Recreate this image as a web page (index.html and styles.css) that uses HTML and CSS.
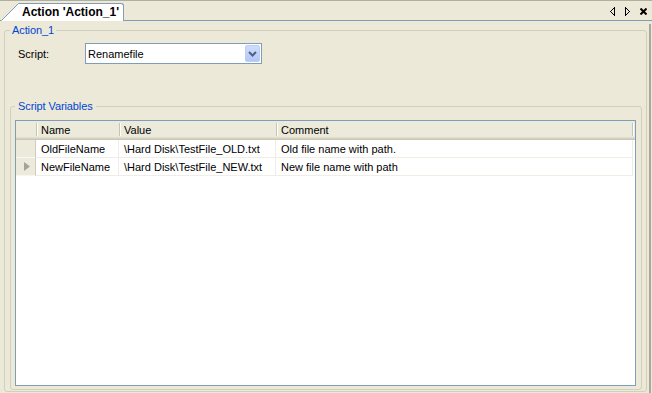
FILE: index.html
```html
<!DOCTYPE html>
<html>
<head>
<meta charset="utf-8">
<title>Action 'Action_1'</title>
<link rel="stylesheet" href="styles.css">
</head>
<body>
<div class="tabstrip">
  <div class="tab">
    <svg class="tab-slant" width="19" height="18" viewBox="0 0 19 18">
      <polygon points="0,18 17.5,0.5 19,0.5 19,18" fill="#fff"/>
      <polyline points="0.5,17.5 17.5,0.5 19,0.5" fill="none" stroke="#7F9DB9"/>
    </svg>
    <span class="tab-label">Action 'Action_1'</span>
  </div>
  <div class="tools">
    <svg class="ic ic-prev" width="5" height="9" viewBox="0 0 5 9" shape-rendering="crispEdges">
      <path d="M4 0h1v9h-1zM3 1h1v1h-1zM2 2h1v1h-1zM1 3h1v1h-1zM0 4h1v1h-1zM1 5h1v1h-1zM2 6h1v1h-1zM3 7h1v1h-1z" fill="#000"/>
    </svg>
    <svg class="ic ic-next" width="5" height="9" viewBox="0 0 5 9" shape-rendering="crispEdges">
      <path d="M0 0h1v9h-1zM1 1h1v1h-1zM2 2h1v1h-1zM3 3h1v1h-1zM4 4h1v1h-1zM3 5h1v1h-1zM2 6h1v1h-1zM1 7h1v1h-1z" fill="#000"/>
    </svg>
    <svg class="ic ic-close" width="7" height="7" viewBox="0 0 7 7">
      <path d="M0.5 0.5L6.5 6.5M6.5 0.5L0.5 6.5" stroke="#000" stroke-width="2" fill="none"/>
    </svg>
  </div>
</div>
<div class="content">
  <fieldset class="group outer">
    <legend>Action_1</legend>
    <div class="script-row">
      <span class="label">Script:</span>
      <div class="combo">
        <span class="combo-text">Renamefile</span>
        <span class="combo-btn">
          <svg width="9" height="6" viewBox="0 0 9 6"><path d="M1 1L4.5 4.5L8 1" stroke="#4D6185" stroke-width="2" fill="none"/></svg>
        </span>
      </div>
    </div>
    <fieldset class="group inner">
      <legend>Script Variables</legend>
      <div class="grid">
        <div class="grid-head">
          <div class="hc rh"></div>
          <div class="hc sep c-name">Name</div>
          <div class="hc sep c-value">Value</div>
          <div class="hc sep c-comment">Comment</div>
          <div class="hc sep c-end"></div>
        </div>
        <div class="grid-row">
          <div class="rh"></div>
          <div class="c c-name">OldFileName</div>
          <div class="c c-value">\Hard Disk\TestFile_OLD.txt</div>
          <div class="c c-comment">Old file name with path.</div>
        </div>
        <div class="grid-row">
          <div class="rh"><svg width="6" height="9" viewBox="0 0 6 9"><polygon points="0,0 6,4.5 0,9" fill="#A5A398"/></svg></div>
          <div class="c c-name">NewFileName</div>
          <div class="c c-value">\Hard Disk\TestFile_NEW.txt</div>
          <div class="c c-comment">New file name with path</div>
        </div>
      </div>
    </fieldset>
  </fieldset>
</div>
</body>
</html>
```

FILE: styles.css
```css
html, body {
  margin: 0;
  padding: 0;
}
body {
  width: 652px;
  height: 393px;
  overflow: hidden;
  background: #ECE9D8;
  font-family: "Liberation Sans", Arial, sans-serif;
  font-size: 11px;
  color: #000;
}

/* ---------- tab strip ---------- */
.tabstrip {
  display: flex;
  align-items: flex-end;
  height: 19px;
  border-top: 1px solid #B1AE9E;
  border-bottom: 1px solid #7F9DB9;
  padding-left: 1px;
  background: #ECE9D8;
}
.tab {
  display: flex;
  height: 18px;
  margin-bottom: -1px;
}
.tab-slant {
  display: block;
}
.tab-label {
  background: #fff;
  border-top: 1px solid #7F9DB9;
  border-right: 1px solid #7F9DB9;
  border-top-right-radius: 3px;
  padding-left: 2px;
  width: 101px;
  font-weight: bold;
  font-size: 12px;
  line-height: 17px;
  white-space: nowrap;
}
.tools {
  margin-left: auto;
  align-self: stretch;
  display: flex;
  align-items: flex-start;
  padding-right: 5px;
}
.ic {
  display: block;
}
.ic-prev { margin-top: 6px; }
.ic-next { margin-top: 6px; margin-left: 10px; }
.ic-close { margin-top: 7px; margin-left: 10px; }

/* ---------- content ---------- */
.content {
  height: 372px;
  border-right: 2px solid #ACA899;
  margin-right: 1px;
}
.group {
  border: 1px solid #D0D0BF;
  border-radius: 3px;
  min-width: 0;
  min-inline-size: 0;
}
.group > legend {
  color: #0046D5;
  font-size: 11px;
  line-height: 13px;
  padding: 0 2px;
  letter-spacing: -0.1px;
}
.outer {
  margin: 3px 2px 0 4px;
  padding: 0 4px 1px 5px;
}
.inner {
  margin: 36px 0 0 0;
  padding: 7px 5px 3px 4px;
}
.inner > legend {
  padding: 0 3px;
}

/* ---------- script row ---------- */
.script-row {
  display: flex;
  align-items: center;
  margin-top: 6px;
  height: 21px;
}
.label {
  width: 75px;
  padding-left: 8px;
  box-sizing: border-box;
}
.combo {
  width: 177px;
  height: 21px;
  box-sizing: border-box;
  border: 1px solid #7F9DB9;
  background: #fff;
  display: flex;
  align-items: center;
  padding: 0 1px 0 2px;
}
.combo-text {
  flex: 1;
}
.combo-btn {
  width: 15px;
  height: 17px;
  box-sizing: border-box;
  border: 1px solid #BBCDF7;
  border-radius: 2px;
  background: linear-gradient(#CFDDFD, #B3C7F5);
  display: flex;
  align-items: center;
  justify-content: center;
}
.combo-btn svg {
  display: block;
}

/* ---------- grid ---------- */
.grid {
  height: 266px;
  box-sizing: border-box;
  border: 1px solid #7F9DB9;
  background: #fff;
}
.grid-head {
  display: flex;
  height: 19px;
  background: linear-gradient(to bottom, #EBEADB 0, #EBEADB 16px, #E2DECD 16px, #E2DECD 17px, #D6D2C2 17px, #D6D2C2 18px, #CBC7B8 18px);
}
.hc {
  height: 19px;
  line-height: 19px;
  padding-left: 5px;
  box-sizing: border-box;
  white-space: nowrap;
}
.hc.rh {
  width: 20px;
  padding: 0;
}
.sep {
  background:
    linear-gradient(#C7C5B2, #C7C5B2) 0 2px / 1px 13px no-repeat,
    linear-gradient(#FFFFFF, #FFFFFF) 1px 2px / 1px 13px no-repeat;
}
.c-name { width: 83px; }
.c-value { width: 157px; }
.hc.c-comment { width: 356px; }
.hc.c-end { flex: 1; padding: 0; }

.grid-row {
  display: flex;
  height: 18px;
}
.grid-row .rh {
  width: 20px;
  box-sizing: border-box;
  background: #EBEADB;
  border-right: 1px solid #CFCCBB;
  border-bottom: 1px solid #F7F6F0;
  display: flex;
  align-items: center;
  padding-left: 8px;
}
.grid-row .rh svg {
  display: block;
}
.c {
  box-sizing: border-box;
  height: 18px;
  padding: 1px 0 0 5px;
  line-height: 16px;
  border-right: 1px solid #EFEDE4;
  border-bottom: 1px solid #EFEDE4;
  white-space: nowrap;
  overflow: hidden;
}
.c.c-comment { width: 357px; }
```
